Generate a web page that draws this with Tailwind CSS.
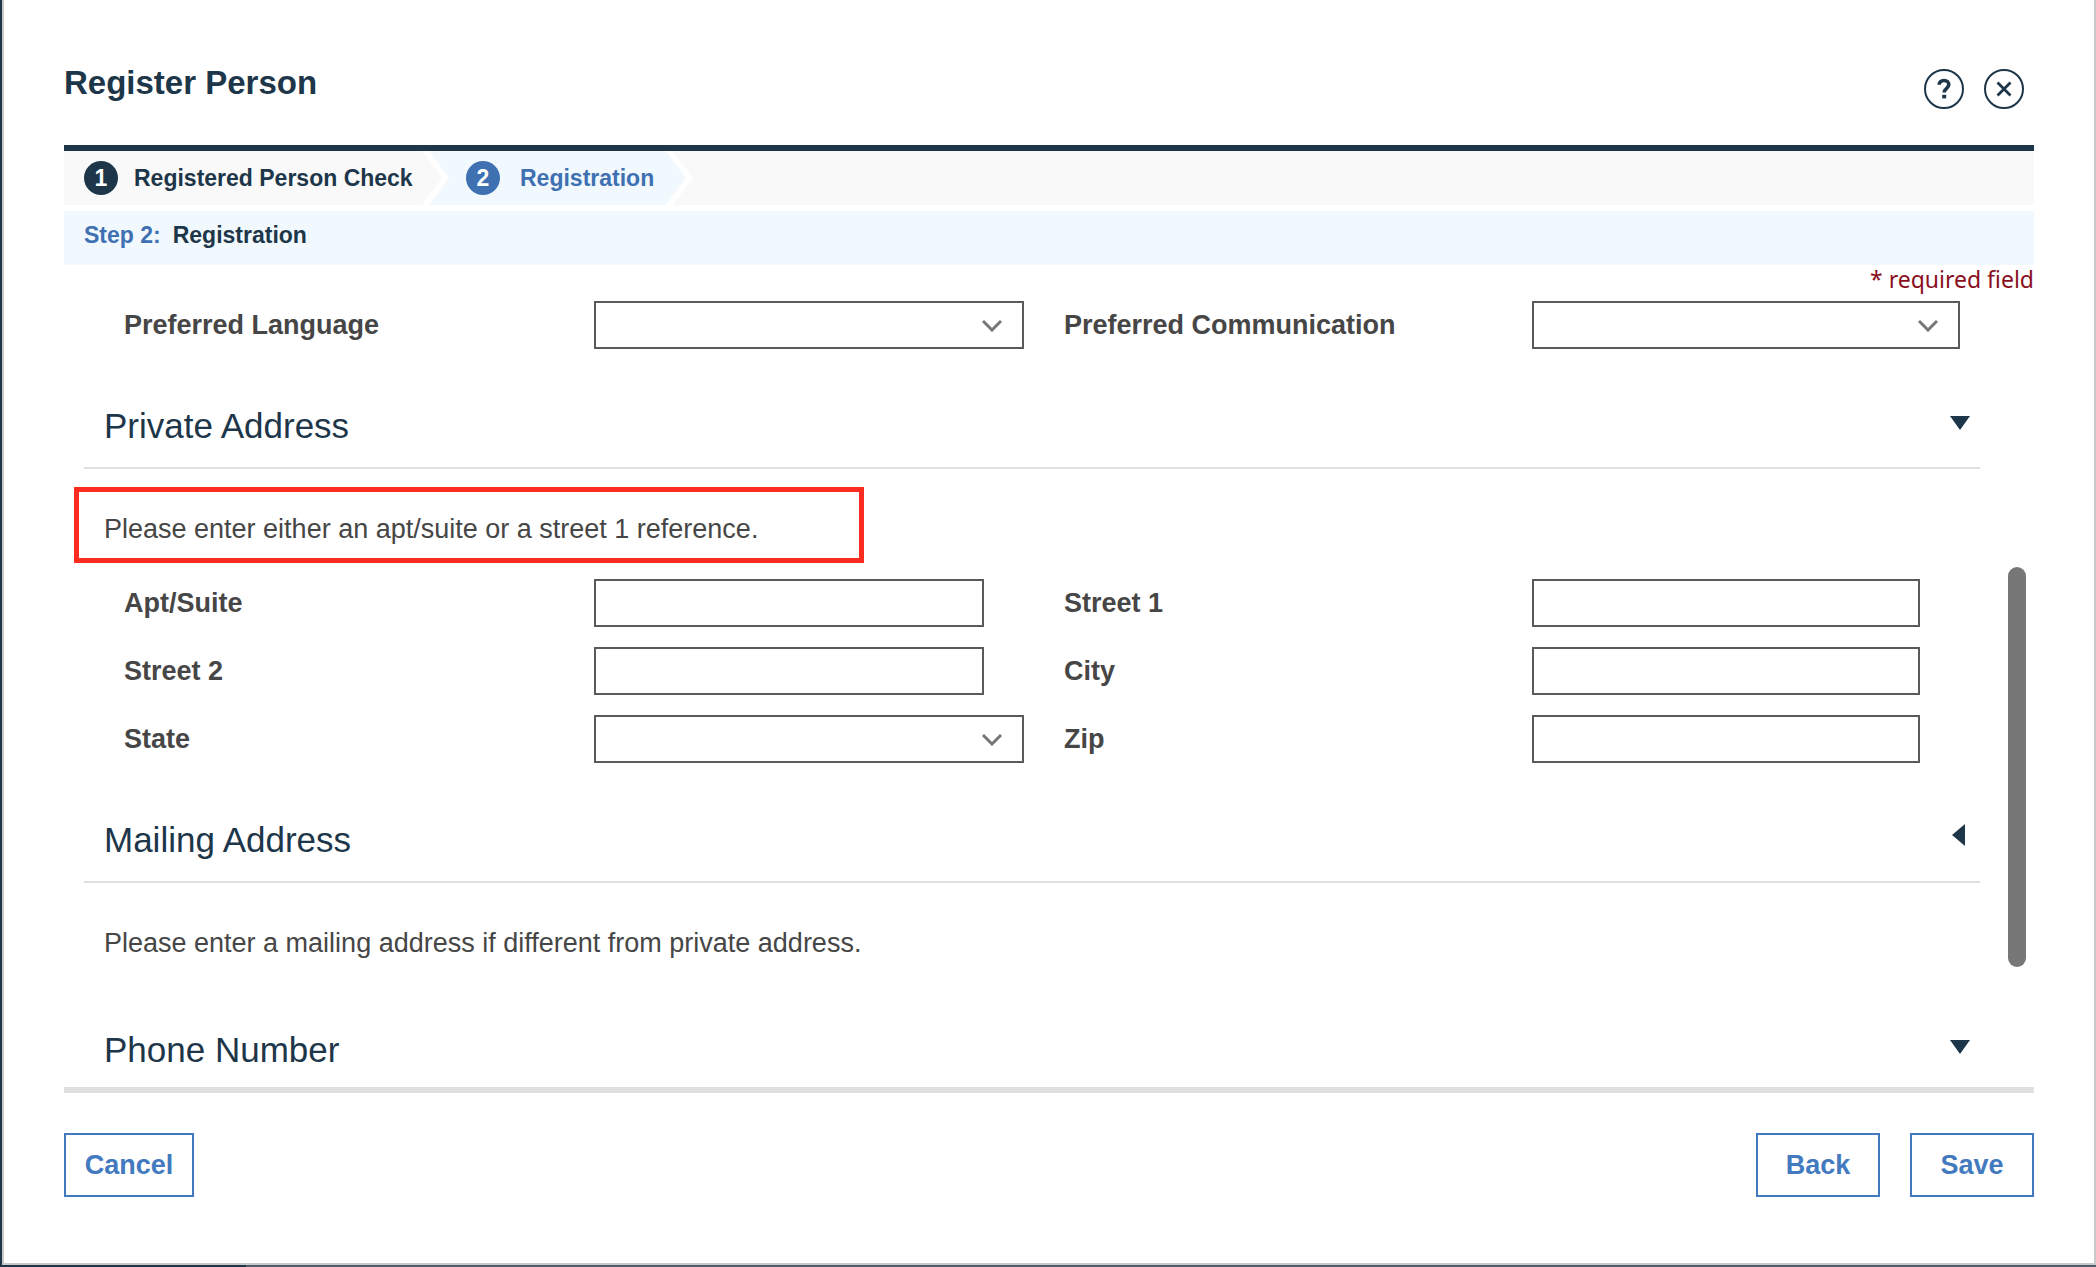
<!DOCTYPE html>
<html lang="en">
<head>
<meta charset="utf-8">
<meta name="viewport" content="width=device-width, initial-scale=1">
<title>Register Person</title>
<script src="https://cdn.jsdelivr.net/npm/@tailwindcss/browser@4"></script>
</head>
<body class="flex min-h-screen flex-col bg-[#1d3649] pl-[2px] font-['Liberation_Sans',Arial,sans-serif] text-[#464646]">
<div class="flex-1 border-x-2 border-b-2 border-[#c9c9c9] bg-white px-[60px] pb-16">

  <header class="flex items-start justify-between pt-[61px] pb-9 text-[#1d3649]">
    <h1 class="text-[33px] leading-[44px] font-bold">Register Person</h1>
    <div class="flex gap-5 pt-2 pr-[10px]">
      <button type="button" aria-label="Help" class="size-10">
        <svg viewBox="0 0 40 40" class="size-10" fill="none" stroke="currentColor"><circle cx="20" cy="20" r="19" stroke-width="2"/><path d="M15.2 15.8c0-2.600 2-4.300 4.800-4.300s4.800 1.600 4.800 4.100c0 3.900-4.600 3.600-4.600 8" stroke-width="3.600"/><path d="M20.200 25.800v3.600" stroke-width="4"/></svg>
      </button>
      <button type="button" aria-label="Close" class="size-10">
        <svg viewBox="0 0 40 40" class="size-10" fill="none" stroke="currentColor"><circle cx="20" cy="20" r="19" stroke-width="2"/><path d="M13.500 13.500l13 13M26.500 13.500l-13 13" stroke-width="2.800"/></svg>
      </button>
    </div>
  </header>

  <nav aria-label="Steps" class="border-t-[6px] border-[#1d3649] bg-[#f9f9f9] text-[23px] leading-[34px] font-bold">
    <ol class="flex h-[54px]">
      <li class="flex items-center gap-4 pl-5 text-[#1d3649]">
        <span class="flex size-[34px] items-center justify-center rounded-full bg-[#1d3649] text-white">1</span>
        <span class="w-[272px] whitespace-nowrap">Registered Person Check</span>
      </li>
      <li class="flex text-[#3e70b2]">
        <svg viewBox="0 0 28 54" class="ml-4 h-[54px] w-7"><path d="M7 0H28V54H7L27 27z" fill="#f1f8fe"/><path d="M0 0H7L27 27L7 54H0L20 27z" fill="#fff"/></svg>
        <div class="flex items-center gap-5 bg-[#f1f8fe] pr-3 pl-4">
          <span class="flex size-[34px] items-center justify-center rounded-full bg-[#3e70b2] text-white">2</span>
          <span>Registration</span>
        </div>
        <svg viewBox="0 0 28 54" class="h-[54px] w-7"><path d="M0 0L20 27L0 54z" fill="#f1f8fe"/><path d="M0 0H7L27 27L7 54H0L20 27z" fill="#fff"/></svg>
      </li>
    </ol>
  </nav>
  <h2 class="mt-[6px] bg-[#f1f8fe] px-5 pt-2 pb-[14px] text-[23px] leading-8 font-bold text-[#1d3649]"><span class="mr-3 text-[#3e70b2]">Step 2:</span>Registration</h2>

  <main class="relative border-b-[6px] border-[#e0e0e0] pr-[54px] pb-3 pl-5">
    <p class="-mr-[54px] mb-2 text-right font-['Noto_Sans',sans-serif] text-[23px] leading-7 text-[#8a0f1e]">* required field</p>

    <div class="grid grid-cols-[minmax(0,470fr)_minmax(0,470fr)_minmax(0,468fr)_minmax(0,448fr)] items-center pl-10 text-[27px] leading-10 font-bold">
      <label for="language">Preferred Language</label>
      <div class="relative mr-10">
        <select id="language" class="block h-12 w-full appearance-none border-2 border-[#5a5a5a] bg-white"><option></option></select>
        <svg viewBox="0 0 20 12" class="pointer-events-none absolute top-[19px] right-[22px] h-3 w-5" fill="none" stroke="#777" stroke-width="3"><path d="M1 1L10 10L19 1"/></svg>
      </div>
      <label for="communication">Preferred Communication</label>
      <div class="relative mr-5">
        <select id="communication" class="block h-12 w-full appearance-none border-2 border-[#5a5a5a] bg-white"><option></option></select>
        <svg viewBox="0 0 20 12" class="pointer-events-none absolute top-[19px] right-[22px] h-3 w-5" fill="none" stroke="#777" stroke-width="3"><path d="M1 1L10 10L19 1"/></svg>
      </div>
    </div>

    <section>
      <div class="mt-[53px] flex items-start justify-between border-b-2 border-[#e0e0e0] pr-[10px] pb-[17px] pl-5 text-[#1d3649]">
        <h3 class="text-[35px] leading-[48px]">Private Address</h3>
        <button type="button" aria-label="Collapse Private Address" class="pt-[10px]"><svg viewBox="0 0 20 22" class="h-[22px] w-5" fill="currentColor"><path d="M0 4H20L10 18z"/></svg></button>
      </div>
      <p class="relative mt-10 mb-[30px] ml-5 w-fit text-[27px] leading-10">Please enter either an apt/suite or a street 1 reference.<span class="absolute -top-[22px] -left-[30px] h-[76px] w-[790px] border-[5px] border-[#fc2c20]"></span></p>
      <div class="grid grid-cols-[minmax(0,470fr)_minmax(0,470fr)_minmax(0,468fr)_minmax(0,448fr)] items-center gap-y-5 pl-10 text-[27px] leading-10 font-bold">
        <label for="apt">Apt/Suite</label>
        <input id="apt" type="text" class="mr-20 h-12 border-2 border-[#5a5a5a] px-3">
        <label for="street1">Street 1</label>
        <input id="street1" type="text" class="mr-[60px] h-12 border-2 border-[#5a5a5a] px-3">
        <label for="street2">Street 2</label>
        <input id="street2" type="text" class="mr-20 h-12 border-2 border-[#5a5a5a] px-3">
        <label for="city">City</label>
        <input id="city" type="text" class="mr-[60px] h-12 border-2 border-[#5a5a5a] px-3">
        <label for="state">State</label>
        <div class="relative mr-10">
          <select id="state" class="block h-12 w-full appearance-none border-2 border-[#5a5a5a] bg-white"><option></option></select>
          <svg viewBox="0 0 20 12" class="pointer-events-none absolute top-[19px] right-[22px] h-3 w-5" fill="none" stroke="#777" stroke-width="3"><path d="M1 1L10 10L19 1"/></svg>
        </div>
        <label for="zip">Zip</label>
        <input id="zip" type="text" class="mr-[60px] h-12 border-2 border-[#5a5a5a] px-3">
      </div>
    </section>

    <section>
      <div class="mt-[53px] flex items-start justify-between border-b-2 border-[#e0e0e0] pr-[10px] pb-[17px] pl-5 text-[#1d3649]">
        <h3 class="text-[35px] leading-[48px]">Mailing Address</h3>
        <button type="button" aria-label="Expand Mailing Address" class="pt-2"><svg viewBox="0 0 20 22" class="h-[22px] w-5" fill="currentColor"><path d="M15 0V22L2 11z"/></svg></button>
      </div>
      <p class="mt-10 mb-[63px] ml-5 text-[27px] leading-10">Please enter a mailing address if different from private address.</p>
    </section>

    <section class="flex items-start justify-between pr-[10px] pb-px pl-5 text-[#1d3649]">
      <h3 class="text-[35px] leading-[48px]">Phone Number</h3>
      <button type="button" aria-label="Collapse Phone Number" class="pt-[10px]"><svg viewBox="0 0 20 22" class="h-[22px] w-5" fill="currentColor"><path d="M0 4H20L10 18z"/></svg></button>
    </section>

    <!-- scroll thumb of the form area -->
    <div class="absolute top-[302px] right-2 h-[400px] w-[18px] rounded-full bg-[#777]"></div>
  </main>

  <footer class="mt-10 flex gap-[30px] text-[27px] leading-[60px] font-bold text-[#437abf]">
    <button type="button" class="mr-auto w-[130px] border-2 border-[#437abf]">Cancel</button>
    <button type="button" class="w-[124px] border-2 border-[#437abf]">Back</button>
    <button type="button" class="w-[124px] border-2 border-[#437abf]">Save</button>
  </footer>
</div>
<div class="ml-[244px] h-[2px] bg-[#4c5c6c]"></div>
</body>
</html>
